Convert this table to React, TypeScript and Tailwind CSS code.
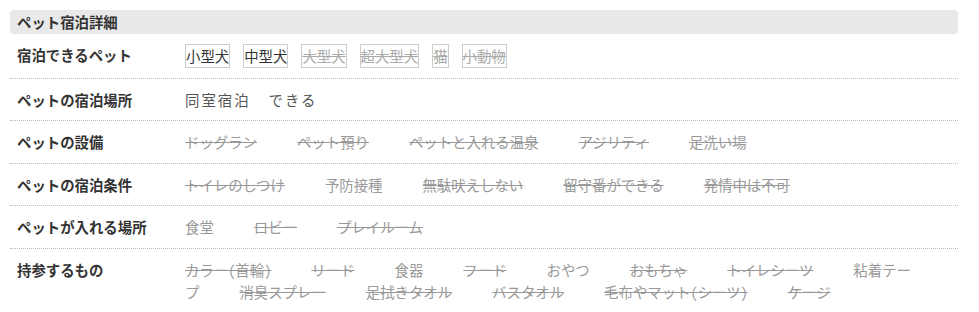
import React from "react";

type Item = { t: string; ok: boolean };

const rows: { label: string; items: Item[] }[] = [
  {
    label: "ペットの設備",
    items: [
      { t: "ドッグラン", ok: false },
      { t: "ペット預り", ok: false },
      { t: "ペットと入れる温泉", ok: false },
      { t: "アジリティ", ok: false },
      { t: "足洗い場", ok: false },
    ],
  },
  {
    label: "ペットの宿泊条件",
    items: [
      { t: "トイレのしつけ", ok: false },
      { t: "予防接種", ok: true },
      { t: "無駄吠えしない", ok: false },
      { t: "留守番ができる", ok: false },
      { t: "発情中は不可", ok: false },
    ],
  },
  {
    label: "ペットが入れる場所",
    items: [
      { t: "食堂", ok: true },
      { t: "ロビー", ok: false },
      { t: "プレイルーム", ok: false },
    ],
  },
  {
    label: "持参するもの",
    items: [
      { t: "カラー(首輪)", ok: false },
      { t: "リード", ok: false },
      { t: "食器", ok: true },
      { t: "フード", ok: false },
      { t: "おやつ", ok: true },
      { t: "おもちゃ", ok: false },
      { t: "トイレシーツ", ok: false },
      { t: "粘着テープ", ok: true },
      { t: "消臭スプレー", ok: false },
      { t: "足拭きタオル", ok: false },
      { t: "バスタオル", ok: false },
      { t: "毛布やマット(シーツ)", ok: false },
      { t: "ケージ", ok: false },
    ],
  },
];

const tags: Item[] = [
  { t: "小型犬", ok: true },
  { t: "中型犬", ok: true },
  { t: "大型犬", ok: false },
  { t: "超大型犬", ok: false },
  { t: "猫", ok: false },
  { t: "小動物", ok: false },
];

function Row({ label, last, children }: { label: string; last?: boolean; children: React.ReactNode }) {
  return (
    <div className={"flex py-[10px] " + (last ? "" : "border-b border-dotted border-[#bbbbbb]")}>
      <div className="w-[175px] shrink-0 pl-[7px] font-bold text-[#333333]">{label}</div>
      <div className="flex-1 min-w-0">{children}</div>
    </div>
  );
}

export default function App() {
  return (
    <div
      className="bg-white w-[979px] h-[312px] overflow-hidden pt-[10px] pl-[10px] text-[14.4px] leading-[1.5] [font-feature-settings:'hwid']"
      style={{ fontFamily: '"Noto Sans CJK JP", "Noto Sans", sans-serif' }}
    >
      <div className="w-[948px]">
        <div className="h-[24px] leading-[24px] rounded-[4px] bg-[#e9e9e9] pl-[7px] font-semibold text-[#333333]">
          ペット宿泊詳細
        </div>
        <Row label="宿泊できるペット">
          <div>
            {tags.map((g) => (
              <span
                key={g.t}
                className={
                  "inline-block border border-[#cccccc] mr-[13px] align-top " +
                  (g.ok ? "text-[#333333]" : "text-[#aaaaaa] line-through")
                }
              >
                {g.t}
              </span>
            ))}
          </div>
        </Row>
        <Row label="ペットの宿泊場所">
          <div className="text-[#555555] tracking-[2px]">
            <span>同室宿泊</span>
            <span className="ml-[18px]">できる</span>
          </div>
        </Row>
        {rows.map((r, i) => (
          <Row key={r.label} label={r.label} last={i === rows.length - 1}>
            <div className="text-[#999999]">
              {r.items.map((it) => (
                <span key={it.t} className={"mr-[40px] " + (it.ok ? "" : "line-through")}>
                  {it.t}
                </span>
              ))}
            </div>
          </Row>
        ))}
      </div>
    </div>
  );
}
